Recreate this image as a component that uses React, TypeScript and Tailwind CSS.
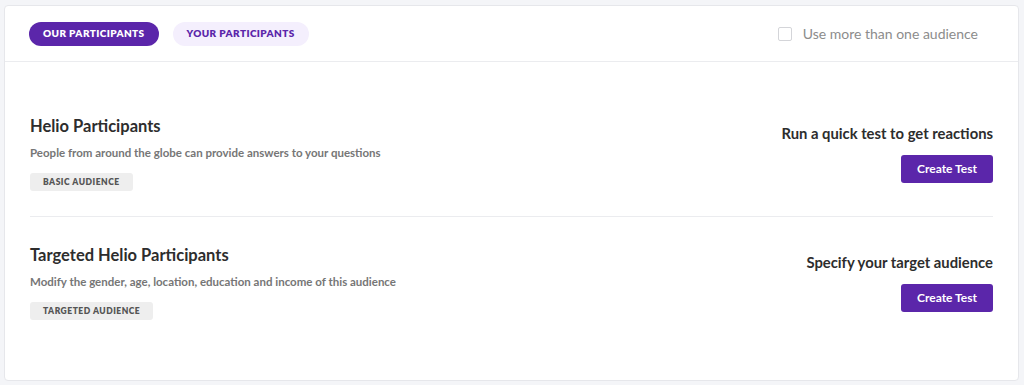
import { useState } from "react";

const PURPLE = "#5b26aa";

const AUDIENCES = [
  {
    title: "Helio Participants",
    description: "People from around the globe can provide answers to your questions",
    badge: "BASIC AUDIENCE",
    cta: "Run a quick test to get reactions",
  },
  {
    title: "Targeted Helio Participants",
    description: "Modify the gender, age, location, education and income of this audience",
    badge: "TARGETED AUDIENCE",
    cta: "Specify your target audience",
  },
];

export default function App() {
  const [tab, setTab] = useState<"ours" | "yours">("ours");
  const [multi, setMulti] = useState(false);

  return (
    <div
      className="w-[1024px] h-[385px] bg-[#f4f5f8] pt-[5px] pl-[4px] pr-[5px]"
      style={{ fontFamily: "Lato, 'Open Sans', sans-serif" }}
    >
      <div className="h-[376px] bg-white border border-[#e6e7eb] rounded-[4px] flex flex-col">
        {/* Header */}
        <div className="h-[56px] border-b border-[#ebecef] flex items-center justify-between pl-[24px] pr-[40px] shrink-0">
          <div className="flex items-center gap-[14px]">
            <button
              onClick={() => setTab("ours")}
              className={`h-[24px] px-[14px] rounded-full text-[10px] font-extrabold tracking-[0.04em] ${
                tab === "ours" ? "bg-[#5b26aa] text-white" : "bg-[#f4effd] text-[#5b26aa]"
              }`}
            >
              OUR PARTICIPANTS
            </button>
            <button
              onClick={() => setTab("yours")}
              className={`h-[24px] px-[14px] rounded-full text-[10px] font-extrabold tracking-[0.04em] ${
                tab === "yours" ? "bg-[#5b26aa] text-white" : "bg-[#f4effd] text-[#5b26aa]"
              }`}
            >
              YOUR PARTICIPANTS
            </button>
          </div>
          <label className="flex items-center gap-[11px] cursor-pointer">
            <span
              onClick={() => setMulti(!multi)}
              className={`w-[14px] h-[14px] rounded-[2px] border ${
                multi ? "border-[#5b26aa] bg-[#5b26aa]" : "border-[#d4d5d9] bg-white"
              }`}
            />
            <span className="text-[14px] text-[#8c8c8c]">Use more than one audience</span>
          </label>
        </div>

        {/* Audiences */}
        <div className="px-[25px] flex flex-col">
          {AUDIENCES.map((a, i) => (
            <div
              key={a.title}
              className={`flex items-center justify-between ${
                i === 0 ? "pt-[52px] pb-[25px] border-b border-[#ebecef]" : "pt-[26px]"
              }`}
            >
              <div className="flex flex-col items-start">
                <h2 className="text-[16.5px] leading-[24px] font-bold text-[#2d2d2d]">{a.title}</h2>
                <p className="mt-[7px] text-[11.5px] leading-[16px] font-bold text-[#767676]">
                  {a.description}
                </p>
                <span className="mt-[12px] h-[18px] px-[13px] rounded-[3px] bg-[#eeeeee] text-[8.5px] font-extrabold tracking-[0.06em] text-[#555] flex items-center">
                  {a.badge}
                </span>
              </div>
              <div className="flex flex-col items-end">
                <div className="text-[14.8px] leading-[20px] font-bold text-[#2d2d2d]">{a.cta}</div>
                <button
                  className="mt-[12px] w-[92px] h-[28px] rounded-[3px] text-white text-[12px] font-bold"
                  style={{ background: PURPLE }}
                >
                  Create Test
                </button>
              </div>
            </div>
          ))}
        </div>
      </div>
    </div>
  );
}
